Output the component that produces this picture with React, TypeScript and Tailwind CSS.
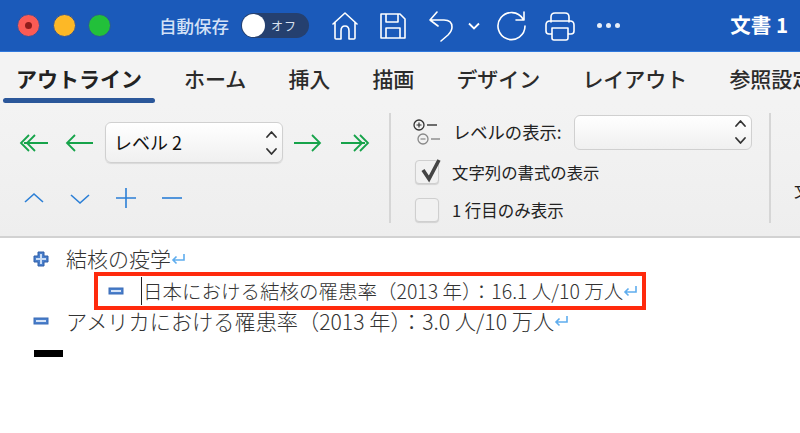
const Stepper = () => (
  <svg width="13" height="30" viewBox="0 0 13 30" fill="none" stroke="#333" strokeWidth="1.8" strokeLinecap="round" strokeLinejoin="round">
    <path d="M2 9 L6.5 4 L11 9" />
    <path d="M2 21 L6.5 26 L11 21" />
  </svg>
);

const Arrow = ({ d, w = 30 }: { d: string; w?: number }) => (
  <svg width={w} height="20" viewBox={`0 0 ${w} 20`} fill="none" stroke="#16a34a" strokeWidth="1.8">
    <path d={d} />
  </svg>
);

const BlueIcon = ({ d }: { d: string }) => (
  <svg width="22" height="22" viewBox="0 0 22 22" fill="none" stroke="#2b7fd6" strokeWidth="1.6">
    <path d={d} />
  </svg>
);

const TitleIcon = ({ w, children }: { w: number; children: React.ReactNode }) => (
  <svg width={w} height="32" viewBox={`0 0 ${w} 32`} fill="none" stroke="white" strokeWidth="1.6" strokeLinecap="round" strokeLinejoin="round">
    {children}
  </svg>
);

const Outline = ({ type }: { type: 'plus' | 'minus' }) => (
  <svg width="16" height="16" viewBox="0 0 16 16" className="shrink-0">
    {type === 'plus' ? (
      <path d="M5 1 H11 V5 H15 V11 H11 V15 H5 V11 H1 V5 H5 Z" fill="#4a7fcb" stroke="#2f5fa8" strokeWidth="1" />
    ) : (
      <rect x="1" y="5" width="14" height="6" fill="#4a7fcb" stroke="#3a6cb8" strokeWidth="1" />
    )}
    {type === 'plus' ? (
      <path d="M3 8 H13 M8 3 V13" stroke="#c9dcf5" strokeWidth="2" />
    ) : (
      <path d="M3 8 H13" stroke="#d5e3f7" strokeWidth="2" />
    )}
  </svg>
);

const Ret = () => (
  <svg width="14" height="14" viewBox="0 0 14 14" fill="none" stroke="#5fadee" strokeWidth="1.6" className="shrink-0">
    <path d="M13 2 V8 H2 M5.5 4.5 L2 8 L5.5 11.5" />
  </svg>
);

const Check = ({ on }: { on?: boolean }) => (
  <div className="relative w-[24px] h-[24px] rounded-[4px] border border-[#cfcfcf] bg-[#f1f1f1] shadow-[0_1px_1px_rgba(0,0,0,0.12)] shrink-0">
    {on && (
      <svg width="26" height="28" viewBox="0 0 26 28" className="absolute left-[2px] top-[-5px]">
        <path d="M5 14 L11 23 L21 4" fill="none" stroke="#444" strokeWidth="3.6" />
      </svg>
    )}
  </div>
);

const tabs = ['ホーム', '挿入', '描画', 'デザイン', 'レイアウト', '参照設定'];

export default function App() {
  return (
    <div className="w-[800px] h-[433px] overflow-hidden bg-white font-['Noto_Sans_CJK_JP','Noto_Sans',sans-serif] text-[#222]">
      {/* title bar */}
      <div className="h-[52px] bg-[#1b5aba] border-b border-[#2f78dc] flex items-center relative">
        <div className="flex items-center gap-[12.5px] ml-[17px]">
          <div className="w-[23px] h-[23px] rounded-full bg-[#fb5b55] border border-[#2a52a0] flex items-center justify-center">
            <div className="w-[7px] h-[7px] rounded-full bg-[#8f1d1b]" />
          </div>
          <div className="w-[23px] h-[23px] rounded-full bg-[#fdb826] border border-[#2a52a0]" />
          <div className="w-[23px] h-[23px] rounded-full bg-[#22c03a] border border-[#2a52a0]" />
        </div>
        <span className="ml-[48px] text-[17.5px] leading-none tracking-normal text-[#d3e1f6] font-medium">自動保存</span>
        <div className="ml-[12px] w-[68px] h-[25px] rounded-full bg-[#25406f] flex items-center pl-[1px]">
          <div className="w-[23px] h-[23px] rounded-full bg-white" />
          <span className="ml-[6px] text-[12px] leading-none tracking-[1px] text-[#d9e2f0]">オフ</span>
        </div>
        <div className="ml-[23px] flex items-center">
          <TitleIcon w={26}>
            <path d="M1 14 L13 3 L25 14 M3 12 V28 Q3 29 4 29 H9 V21 Q9 16 13 16 Q17 16 17 21 V29 H22 Q23 29 23 28 V12" />
          </TitleIcon>
          <div className="ml-[22px]">
            <TitleIcon w={26}>
              <path d="M1 4 H20 L25 9 V28 H1 Z M6 4 V12 H18 V4 M6 28 V18 H20 V28" />
            </TitleIcon>
          </div>
          <div className="ml-[22px]">
            <TitleIcon w={26}>
              <path d="M2 10 H16 Q24 10 24 17 Q24 21 20 25 L13 31 M9 2 L2 10 L10 16" />
            </TitleIcon>
          </div>
          <svg width="12" height="8" viewBox="0 0 12 8" fill="none" stroke="white" strokeWidth="1.8" className="ml-[14px] mt-[1px]">
            <path d="M1 1.5 L6 6.5 L11 1.5" />
          </svg>
          <div className="ml-[17px]">
            <TitleIcon w={30}>
              <path d="M26 9 A13.5 13.5 0 1 0 28 16 M27 2 V10 H19" />
            </TitleIcon>
          </div>
          <div className="ml-[18px]">
            <TitleIcon w={30}>
              <path d="M6 12 V7 Q6 3 10 3 H20 Q24 3 24 7 V12 M6 24 H4 Q1 24 1 21 V15 Q1 11 5 11 H25 Q29 11 29 15 V21 Q29 24 26 24 H24 M7 18 H23 V28 Q23 30 21 30 H9 Q7 30 7 28 Z" />
            </TitleIcon>
          </div>
          <div className="ml-[22px] flex gap-[4px]">
            <div className="w-[5px] h-[5px] rounded-full bg-[#e8eef8]" />
            <div className="w-[5px] h-[5px] rounded-full bg-[#e8eef8]" />
            <div className="w-[5px] h-[5px] rounded-full bg-[#e8eef8]" />
          </div>
        </div>
        <span className="absolute right-[12px] top-[11px] text-[20.5px] leading-[26px] font-bold text-white whitespace-nowrap">文書 1</span>
      </div>

      {/* tabs */}
      <div className="h-[52px] bg-[#f3f3f3] flex items-end pb-[12px] pl-[16px] gap-[42px] whitespace-nowrap text-[21px] leading-[28px] text-[#2b2b2b]">
        <div className="relative font-bold text-[#222]">
          アウトライン
          <div className="absolute left-[-13px] right-[-13px] bottom-[-11px] h-[5px] rounded-full bg-[#2b579a]" />
        </div>
        {tabs.map((t) => (
          <div key={t} className="font-medium">{t}</div>
        ))}
      </div>

      {/* ribbon */}
      <div className="h-[134px] bg-gradient-to-b from-[#f3f3f3] to-[#eeeeee] border-b-2 border-[#d2d2d2] flex pt-[9px]">
        <div className="w-[391px] h-[110px] border-r-2 border-[#d6d6d6] shrink-0">
          <div className="flex items-center h-[41px] mt-[9px] pl-[19px]">
            <Arrow d="M10 2 L2 10 L10 18 M16 2 L8 10 L16 18 M5 10 H29" />
            <div className="ml-[16px]">
              <Arrow w={29} d="M10 2 L2 10 L10 18 M2 10 H28" />
            </div>
            <div className="ml-[11px] w-[178px] h-[41px] rounded-[6px] border border-[#d0d0d0] bg-gradient-to-b from-white to-[#f0f0f0] shadow-[0_1px_1px_rgba(0,0,0,0.1)] flex items-center justify-between pl-[8px] pr-[4px]">
              <span className="text-[18px] text-[#111]">レベル 2</span>
              <Stepper />
            </div>
            <div className="ml-[10px]">
              <Arrow w={29} d="M1 10 H27 M19 2 L27 10 L19 18" />
            </div>
            <div className="ml-[18px]">
              <Arrow d="M1 10 H25 M14 2 L22 10 L14 18 M20 2 L28 10 L20 18" />
            </div>
          </div>
          <div className="flex items-center h-[22px] mt-[24px] pl-[23px] gap-[24px]">
            <BlueIcon d="M2 15 L11 7 L20 15" />
            <BlueIcon d="M2 8 L11 16 L20 8" />
            <BlueIcon d="M1 11 H21 M11 1 V21" />
            <BlueIcon d="M1 11 H21" />
          </div>
        </div>

        <div className="w-[380px] h-[110px] border-r-2 border-[#d6d6d6] shrink-0 pl-[21px] relative">
          <div className="flex items-center h-[36px] mt-[1px]">
            <svg width="30" height="30" viewBox="0 0 30 30" fill="none" className="shrink-0">
              <circle cx="7" cy="8" r="5" stroke="#333" strokeWidth="1.3" />
              <path d="M4.5 8 H9.5 M7 5.5 V10.5" stroke="#333" strokeWidth="1.2" />
              <path d="M15 8 H25" stroke="#333" strokeWidth="1.4" />
              <circle cx="11" cy="22" r="5" stroke="#888" strokeWidth="1.3" />
              <path d="M8.5 22 H13.5" stroke="#888" strokeWidth="1.2" />
              <path d="M19 22 H28" stroke="#888" strokeWidth="1.4" />
            </svg>
            <span className="ml-[11px] text-[17.3px] text-[#222] whitespace-nowrap">レベルの表示:</span>
            <div className="ml-[12px] w-[178px] h-[35px] rounded-[6px] border border-[#d0d0d0] bg-gradient-to-b from-white to-[#f0f0f0] flex items-center justify-end pr-[4px]">
              <Stepper />
            </div>
          </div>
          <div className="flex items-center h-[24px] mt-[10px] pl-[3px]">
            <Check on />
            <span className="ml-[13px] text-[16.4px] leading-none text-[#222]">文字列の書式の表示</span>
          </div>
          <div className="flex items-center h-[24px] mt-[14px] pl-[3px]">
            <Check />
            <span className="ml-[13px] text-[16.5px] leading-none text-[#222]">1 行目のみ表示</span>
          </div>
        </div>
        <span className="ml-[23px] mt-[69px] text-[16px] leading-none">文</span>
      </div>

      {/* document */}
      <div className="font-light text-[#333] whitespace-nowrap">
        <div className="flex items-center h-[26px] pl-[33px] mt-[8px] text-[21px]">
          <Outline type="plus" />
          <span className="ml-[17px]">結核の疫学</span>
          <Ret />
        </div>
        <div className="flex items-center ml-[94px] w-[552px] h-[38px] border-[4px] border-[#ff2a0d] pl-[10px]">
          <Outline type="minus" />
          <div className="ml-[17px] mr-[1px] w-[1px] h-[28px] bg-[#222]" />
          <span className="text-[19.5px]">日本における結核の罹患率（2013 年）：16.1 人/10 万人</span>
          <Ret />
        </div>
        <div className="flex items-center h-[22px] pl-[33px] text-[21.2px]">
          <Outline type="minus" />
          <span className="ml-[17px]">アメリカにおける罹患率（2013 年）：3.0 人/10 万人</span>
          <Ret />
        </div>
        <div className="w-[29px] h-[7px] bg-black ml-[34px] mt-[18px]" />
      </div>
    </div>
  );
}
